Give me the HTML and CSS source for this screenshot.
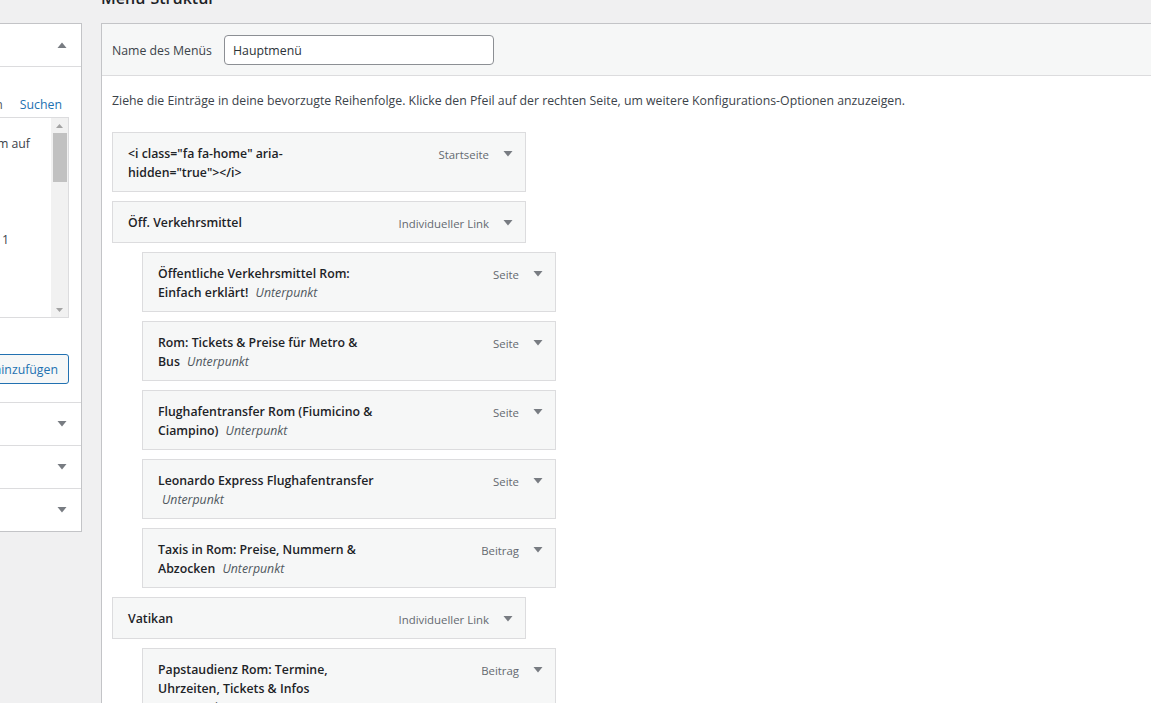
FILE: index.html
```html
<!DOCTYPE html>
<html lang="de">
<head>
<meta charset="utf-8">
<title>Menüs</title>
<link rel="stylesheet" href="styles.css">
</head>
<body>
<div class="page">
  <div class="side">
    <div class="acc-head">
      <span class="acc-title">Seiten</span>
      <span class="acc-arrow"><svg width="10" height="6" viewBox="0 0 10 6"><path d="M0.5 6L5 0.5 9.5 6z" fill="#787c82"/></svg></span>
    </div>
    <div class="acc-content">
      <div class="tabs">
        <span class="tab tab-active">Zuletzt erstellt</span>
        <span class="tab">Alle anzeigen</span>
        <a class="tab tab-link" href="#">Suchen</a>
      </div>
      <div class="listbox">
        <div class="list-items">
          <div class="list-row row-a">Sehenswürdigkeiten in Rom auf</div>
          <div class="list-row row-b">Rom Blog Seite 1</div>
        </div>
        <div class="scrollbar">
          <div class="sb-btn"><svg width="7" height="4" viewBox="0 0 7 4"><path d="M0 4L3.5 0 7 4z" fill="#a3a3a3"/></svg></div>
          <div class="sb-track"><div class="sb-thumb"></div></div>
          <div class="sb-btn"><svg width="7" height="4" viewBox="0 0 7 4"><path d="M0 0L3.5 4 7 0z" fill="#a3a3a3"/></svg></div>
        </div>
      </div>
      <div class="btn-row">
        <button class="btn-add" type="button">Zum Menü hinzufügen</button>
      </div>
    </div>
    <div class="acc-row"><span class="acc-title">Beiträge</span><span class="acc-arrow"><svg width="10" height="6" viewBox="0 0 10 6"><path d="M0.5 0L5 5.5 9.5 0z" fill="#787c82"/></svg></span></div>
    <div class="acc-row"><span class="acc-title">Individuelle Links</span><span class="acc-arrow"><svg width="10" height="6" viewBox="0 0 10 6"><path d="M0.5 0L5 5.5 9.5 0z" fill="#787c82"/></svg></span></div>
    <div class="acc-row"><span class="acc-title">Kategorien</span><span class="acc-arrow"><svg width="10" height="6" viewBox="0 0 10 6"><path d="M0.5 0L5 5.5 9.5 0z" fill="#787c82"/></svg></span></div>
  </div>

  <div class="main">
    <h2 class="main-title">Menü-Struktur</h2>
    <div class="menu-edit">
      <div class="menu-header">
        <label class="name-label" for="menu-name">Name des Menüs</label>
        <input class="name-input" id="menu-name" type="text" value="Hauptmenü">
      </div>
      <div class="menu-body">
        <p class="instructions">Ziehe die Einträge in deine bevorzugte Reihenfolge. Klicke den Pfeil auf der rechten Seite, um weitere Konfigurations-Optionen anzuzeigen.</p>
        <ul class="menu-list">
          <li class="item">
            <div class="handle">
              <div class="title"><span class="mt">&lt;i class="fa fa-home" aria-<br>hidden="true"&gt;&lt;/i&gt;</span></div>
              <div class="controls"><span class="type">Startseite</span><span class="edit"><svg width="10" height="6" viewBox="0 0 10 6"><path d="M0.5 0L5 5.5 9.5 0z" fill="#787c82"/></svg></span></div>
            </div>
          </li>
          <li class="item">
            <div class="handle">
              <div class="title"><span class="mt">Öff. Verkehrsmittel</span></div>
              <div class="controls"><span class="type">Individueller Link</span><span class="edit"><svg width="10" height="6" viewBox="0 0 10 6"><path d="M0.5 0L5 5.5 9.5 0z" fill="#787c82"/></svg></span></div>
            </div>
          </li>
          <li class="item depth-1">
            <div class="handle">
              <div class="title"><span class="mt">Öffentliche Verkehrsmittel Rom:<br>Einfach erklärt!</span> <span class="sub">Unterpunkt</span></div>
              <div class="controls"><span class="type">Seite</span><span class="edit"><svg width="10" height="6" viewBox="0 0 10 6"><path d="M0.5 0L5 5.5 9.5 0z" fill="#787c82"/></svg></span></div>
            </div>
          </li>
          <li class="item depth-1">
            <div class="handle">
              <div class="title"><span class="mt">Rom: Tickets &amp; Preise für Metro &amp;<br>Bus</span> <span class="sub">Unterpunkt</span></div>
              <div class="controls"><span class="type">Seite</span><span class="edit"><svg width="10" height="6" viewBox="0 0 10 6"><path d="M0.5 0L5 5.5 9.5 0z" fill="#787c82"/></svg></span></div>
            </div>
          </li>
          <li class="item depth-1">
            <div class="handle">
              <div class="title"><span class="mt">Flughafentransfer Rom (Fiumicino &amp;<br>Ciampino)</span> <span class="sub">Unterpunkt</span></div>
              <div class="controls"><span class="type">Seite</span><span class="edit"><svg width="10" height="6" viewBox="0 0 10 6"><path d="M0.5 0L5 5.5 9.5 0z" fill="#787c82"/></svg></span></div>
            </div>
          </li>
          <li class="item depth-1">
            <div class="handle">
              <div class="title"><span class="mt">Leonardo Express Flughafentransfer</span><br><span class="sub">Unterpunkt</span></div>
              <div class="controls"><span class="type">Seite</span><span class="edit"><svg width="10" height="6" viewBox="0 0 10 6"><path d="M0.5 0L5 5.5 9.5 0z" fill="#787c82"/></svg></span></div>
            </div>
          </li>
          <li class="item depth-1">
            <div class="handle">
              <div class="title"><span class="mt">Taxis in Rom: Preise, Nummern &amp;<br>Abzocken</span> <span class="sub">Unterpunkt</span></div>
              <div class="controls"><span class="type">Beitrag</span><span class="edit"><svg width="10" height="6" viewBox="0 0 10 6"><path d="M0.5 0L5 5.5 9.5 0z" fill="#787c82"/></svg></span></div>
            </div>
          </li>
          <li class="item">
            <div class="handle">
              <div class="title"><span class="mt">Vatikan</span></div>
              <div class="controls"><span class="type">Individueller Link</span><span class="edit"><svg width="10" height="6" viewBox="0 0 10 6"><path d="M0.5 0L5 5.5 9.5 0z" fill="#787c82"/></svg></span></div>
            </div>
          </li>
          <li class="item depth-1">
            <div class="handle">
              <div class="title"><span class="mt">Papstaudienz Rom: Termine,<br>Uhrzeiten, Tickets &amp; Infos</span><br><span class="sub">Unterpunkt</span></div>
              <div class="controls"><span class="type">Beitrag</span><span class="edit"><svg width="10" height="6" viewBox="0 0 10 6"><path d="M0.5 0L5 5.5 9.5 0z" fill="#787c82"/></svg></span></div>
            </div>
          </li>
        </ul>
      </div>
    </div>
  </div>
</div>
</body>
</html>
```

FILE: styles.css
```css
html, body {
  margin: 0;
  padding: 0;
}
html {
  overflow: hidden;
}
body {
  width: 1151px;
  height: 703px;
  overflow: hidden;
  background: #f0f0f1;
  font-family: "Open Sans", "Noto Sans", sans-serif;
  font-size: 12.3px;
  color: #3c434a;
}

.page {
  display: flex;
  align-items: flex-start;
  gap: 19px;
  margin-left: -200px;
}

/* ---------- left column ---------- */
.side {
  flex: 0 0 282px;
  box-sizing: border-box;
  margin-top: 23px;
  background: #fff;
  border: 1px solid #c3c4c7;
}
.acc-head,
.acc-row {
  height: 42px;
  display: flex;
  align-items: center;
  justify-content: space-between;
  padding-left: 14px;
}
.acc-head {
  border-bottom: 1px solid #dcdcde;
}
.acc-row {
  border-top: 1px solid #dcdcde;
}
.acc-title {
  font-weight: 600;
  color: #1d2327;
  font-size: 13px;
}
.acc-arrow {
  width: 20px;
  height: 20px;
  margin-right: 9px;
  display: flex;
  align-items: center;
  justify-content: center;
}
.acc-content {
  padding: 29px 12px 18px 10px;
}
.tabs {
  display: flex;
  justify-content: flex-end;
  gap: 17px;
  line-height: 18px;
  padding-right: 7px;
  margin-bottom: 3px;
  white-space: nowrap;
}
.tab {
  color: #50575e;
}
.tab-active {
  color: #1d2327;
  font-weight: 600;
}
.tab-link {
  color: #2271b1;
  text-decoration: none;
}
.listbox {
  height: 201px;
  box-sizing: border-box;
  border: 1px solid #dcdcde;
  display: flex;
  background: #fff;
}
.list-items {
  flex: 1;
  overflow: hidden;
  white-space: nowrap;
}
.list-row {
  text-align: right;
  line-height: 19px;
}
.row-a {
  margin-top: 16px;
  padding-right: 21px;
}
.row-b {
  margin-top: 77px;
  padding-right: 42px;
}
.scrollbar {
  flex: 0 0 17px;
  display: flex;
  flex-direction: column;
  background: #f1f1f1;
}
.sb-btn {
  height: 15px;
  display: flex;
  align-items: center;
  justify-content: center;
}
.sb-track {
  flex: 1;
}
.sb-thumb {
  height: 49px;
  margin: 0 1px 0 2px;
  background: #c1c1c1;
}
.btn-row {
  margin-top: 36px;
  display: flex;
  justify-content: flex-end;
}
.btn-add {
  height: 30px;
  padding: 0 10px;
  border: 1px solid #2271b1;
  border-radius: 3px;
  background: #f6f7f7;
  color: #2271b1;
  font-family: inherit;
  font-size: 12.3px;
  white-space: nowrap;
}

/* ---------- main column ---------- */
.main {
  flex: 0 0 1100px;
}
.main-title {
  margin: -12px 0 15px;
  height: 20px;
  line-height: 20px;
  font-size: 16px;
  font-weight: 600;
  color: #1d2327;
}
.menu-edit {
  background: #fff;
  border: 1px solid #c3c4c7;
  height: 720px;
}
.menu-header {
  display: flex;
  align-items: center;
  padding: 11px 10px 10px;
  background: #f6f7f7;
  border-bottom: 1px solid #dcdcde;
}
.name-label {
  flex: 0 0 112px;
  color: #3c434a;
}
.name-input {
  box-sizing: border-box;
  width: 270px;
  height: 30px;
  padding: 0 8px;
  border: 1px solid #8c8f94;
  border-radius: 4px;
  background: #fff;
  color: #2c3338;
  font-family: inherit;
  font-size: 12.3px;
}
.menu-body {
  padding: 0 10px;
}
.instructions {
  margin: 15px 0 0;
  line-height: 19px;
  color: #3c434a;
}
.menu-list {
  list-style: none;
  margin: 0;
  padding: 13px 0 0;
}
.item {
  margin-top: 9px;
}
.item.depth-1 {
  margin-left: 30px;
}
.handle {
  position: relative;
  width: 382px;
  min-height: 20px;
  padding: 11px 15px 9px;
  background: #f6f7f7;
  border: 1px solid #dcdcde;
}
.title {
  line-height: 19px;
  white-space: nowrap;
}
.mt {
  font-weight: 600;
  color: #1d2327;
}
.sub {
  margin-left: 4px;
  font-style: italic;
  color: #50575e;
}
.controls {
  position: absolute;
  right: 20px;
  top: 1px;
  font-size: 11.4px;
}
.type {
  display: inline-block;
  padding: 12px 16px;
  line-height: 18px;
  color: #646970;
  white-space: nowrap;
}
.edit {
  position: absolute;
  right: -18px;
  top: -1px;
  width: 30px;
  height: 42px;
  display: flex;
  align-items: center;
  justify-content: center;
}
```
